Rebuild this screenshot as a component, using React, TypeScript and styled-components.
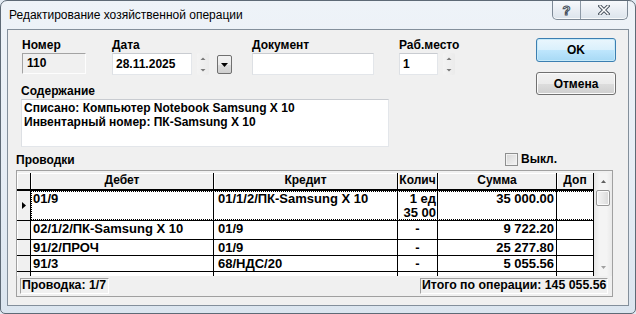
import React from "react";
import styled, { createGlobalStyle } from "styled-components";

const GlobalStyle = createGlobalStyle`
  html, body {
    margin: 0;
    padding: 0;
    background: #e3ebf3;
  }
  body {
    font-family: "Liberation Sans", Arial, sans-serif;
    font-size: 12px;
    color: #000;
  }
`;

const Window = styled.div`
  box-sizing: border-box;
  width: 636px;
  height: 314px;
  border: 1px solid #5e6a76;
  border-radius: 7px 7px 5px 5px;
  background: linear-gradient(180deg, #eef3f8 0%, #e6edf5 55%, #dbe5ef 100%);
  padding: 0 6px 7px 6px;
  display: flex;
  flex-direction: column;
  overflow: hidden;
`;

const TitleBar = styled.div`
  height: 28px;
  display: flex;
  justify-content: space-between;
  align-items: flex-start;
`;

const Title = styled.div`
  margin: 7px 0 0 2px;
  font: 12px/14px "Liberation Sans", Arial, sans-serif;
`;

const CaptionButtons = styled.div`
  display: flex;
  height: 18px;
  margin-right: 1px;
  border: 1px solid #7d8996;
  border-top: none;
  border-radius: 0 0 5px 5px;
  background: linear-gradient(180deg, #f7f9fc 0%, #e9eef4 50%, #dce4ec 100%);
  box-shadow: inset 0 -1px 0 rgba(255, 255, 255, 0.8);
  overflow: hidden;
`;

const CaptionButton = styled.div<{ $w: number }>`
  width: ${(p) => p.$w}px;
  display: flex;
  align-items: center;
  justify-content: center;
  & + & {
    border-left: 1px solid #8d99a6;
  }
`;

const HelpGlyph = styled.span`
  font: bold 13px/13px "Liberation Sans", Arial, sans-serif;
  color: #fff;
  -webkit-text-stroke: 1px #46505c;
  margin-top: 1px;
`;

const Client = styled.div`
  flex: 1;
  background: #f0f0f0;
  border: 1px solid #838f9b;
  display: flex;
  flex-direction: column;
`;

const TopSection = styled.div`
  display: flex;
  padding: 8px 12px 0 13px;
`;

const LeftPane = styled.div`
  flex: 1;
  display: flex;
  flex-direction: column;
`;

const FieldsRow = styled.div`
  display: flex;
  padding-left: 1px;
`;

const FieldGroup = styled.div<{ $w?: number }>`
  width: ${(p) => (p.$w ? `${p.$w}px` : "auto")};
  display: flex;
  flex-direction: column;
`;

const Label = styled.div`
  font-weight: bold;
  line-height: 15px;
  height: 15px;
  white-space: nowrap;
`;

const ControlRow = styled.div`
  display: flex;
  align-items: flex-start;
  height: 22px;
`;

const TextBox = styled.div<{ $w: number; $disabled?: boolean }>`
  box-sizing: border-box;
  width: ${(p) => p.$w}px;
  height: ${(p) => (p.$disabled ? 21 : 22)}px;
  padding: 0 3px;
  font-weight: bold;
  line-height: ${(p) => (p.$disabled ? 19 : 20)}px;
  background: ${(p) => (p.$disabled ? "#f0f0f0" : "#fff")};
  border: 1px solid;
  border-color: ${(p) =>
    p.$disabled
      ? "#a3a3a3 #fdfdfd #fdfdfd #a3a3a3"
      : "#c9ccd1 #e3e6ea #e3e6ea #dde0e4"};
  padding-left: ${(p) => (p.$disabled ? 4 : 3)}px;
`;

const SpinBox = styled.div`
  margin-left: 5px;
  width: 12px;
  height: 22px;
  display: flex;
  border-radius: 2px;
  background: linear-gradient(90deg, #f3f3f3, #ebebeb);
`;

const DropButton = styled.div`
  box-sizing: border-box;
  margin: 2px 0 0 8px;
  width: 15px;
  height: 19px;
  border: 1px solid #707070;
  border-radius: 2px;
  background: linear-gradient(180deg, #f2f2f2 0%, #ebebeb 50%, #dddddd 51%, #cfcfcf 100%);
  display: flex;
  align-items: center;
  justify-content: center;
`;

const ContentLabel = styled(Label)`
  margin-top: 9px;
`;

const Memo = styled.div`
  box-sizing: border-box;
  width: 368px;
  height: 48px;
  background: #fff;
  border: 1px solid;
  border-color: #c9ccd1 #e3e6ea #e3e6ea #dde0e4;
  padding: 1px 2px 0 2px;
  font-weight: bold;
  line-height: 14px;
`;

const ButtonsColumn = styled.div`
  width: 80px;
  display: flex;
  flex-direction: column;
  gap: 10px;
`;

const PushButton = styled.div<{ $default?: boolean; $h: number }>`
  box-sizing: border-box;
  height: ${(p) => p.$h}px;
  border: 1px solid ${(p) => (p.$default ? "#3c7fb1" : "#707070")};
  border-radius: 3px;
  background: ${(p) =>
    p.$default
      ? "linear-gradient(180deg, #eaf6fd 0%, #d9f0fc 50%, #bee6fd 51%, #a7d9f5 100%)"
      : "linear-gradient(180deg, #f2f2f2 0%, #ebebeb 50%, #dddddd 51%, #cfcfcf 100%)"};
  box-shadow: inset 0 0 0 1px ${(p) => (p.$default ? "#c7eaf9" : "#fbfbfb")};
  display: flex;
  align-items: center;
  justify-content: center;
  font-weight: bold;
  line-height: 14px;
`;

const ProvodkiRow = styled.div`
  height: 23px;
  display: flex;
  padding: 0 71px 0 8px;
`;

const ProvodkiLabel = styled(Label)`
  align-self: flex-end;
  margin-bottom: 2px;
`;

const CheckGroup = styled.div`
  margin-left: auto;
  margin-top: 2px;
  display: flex;
  align-items: center;
  gap: 3px;
  font-weight: bold;
  line-height: 15px;
`;

const CheckBox = styled.div`
  box-sizing: border-box;
  width: 13px;
  height: 13px;
  border: 1px solid #8e8f8f;
  background: linear-gradient(135deg, #d6d6d6 0%, #f4f4f4 100%);
  box-shadow: inset 0 0 0 1px #f2f2f2;
`;

const GridPanel = styled.div`
  box-sizing: border-box;
  margin-left: 8px;
  width: 597px;
  height: 127px;
  border: 1px solid #a0a0a0;
  padding-top: 2px;
  display: flex;
  flex-direction: column;
`;

const GridArea = styled.div`
  display: flex;
  height: 103px;
`;

const GridMain = styled.div`
  width: 577px;
  display: flex;
  flex-direction: column;
`;

const HeaderRow = styled.div`
  display: flex;
  height: 18px;
`;

const HeaderCell = styled.div<{ $w: number }>`
  box-sizing: border-box;
  width: ${(p) => p.$w}px;
  height: 18px;
  border-right: 1px solid #000;
  border-bottom: 2px solid #000;
  background: #f0f0f0;
  box-shadow: inset 1px 1px 0 #fff;
  text-align: center;
  font-weight: bold;
  line-height: 14px;
  white-space: nowrap;
  overflow: hidden;
`;

const GridBody = styled.div`
  height: 85px;
  overflow: hidden;
  display: flex;
  flex-direction: column;
`;

const Row = styled.div<{ $h: number }>`
  box-sizing: border-box;
  flex: none;
  display: flex;
  height: ${(p) => p.$h}px;
  border-bottom: 1px solid #000;
`;

const Indicator = styled.div`
  box-sizing: border-box;
  width: 14px;
  border-right: 1px solid #000;
  background: #f0f0f0;
  box-shadow: inset 1px 0 0 #fff;
  display: flex;
  align-items: center;
  padding-left: 5px;
`;

const Cells = styled.div<{ $focused?: boolean }>`
  display: flex;
  flex: 1;
  background: #fff;
  outline: ${(p) => (p.$focused ? "1px dotted #000" : "none")};
  outline-offset: -1px;
`;

const Cell = styled.div<{ $w: number; $align: string; $pl: number; $pr: number }>`
  box-sizing: border-box;
  width: ${(p) => p.$w}px;
  border-right: 1px solid #000;
  padding: 1px ${(p) => p.$pr}px 0 ${(p) => p.$pl}px;
  text-align: ${(p) => p.$align};
  font-weight: bold;
  font-size: 13px;
  line-height: 14px;
  white-space: nowrap;
  overflow: hidden;
`;

const ScrollBar = styled.div`
  width: 18px;
  display: flex;
  flex-direction: column;
  background: linear-gradient(90deg, #e6e6e6 0%, #f4f4f4 30%, #f4f4f4 70%, #e9e9e9 100%);
`;

const ScrollButton = styled.div`
  height: 17px;
  display: flex;
  align-items: center;
  justify-content: center;
`;

const Thumb = styled.div`
  box-sizing: border-box;
  margin: 0 2px 0 2px;
  height: 16px;
  border: 1px solid #979797;
  border-radius: 2px;
  background: linear-gradient(90deg, #f4f4f4 0%, #e8e8e8 50%, #d9d9d9 100%);
  box-shadow: inset 0 0 0 1px #fbfbfb;
`;

const Track = styled.div`
  flex: 1;
`;

const StatusBar = styled.div`
  height: 20px;
  display: flex;
  justify-content: space-between;
  align-items: flex-start;
  padding: 2px 4px 0 3px;
`;

const StatusBox = styled.div<{ $w: number }>`
  box-sizing: border-box;
  width: ${(p) => p.$w}px;
  height: 16px;
  border: 1px solid;
  border-color: #a0a0a0 #fff #fff #a0a0a0;
  padding: 0 2px 0 1px;
  font-weight: bold;
  font-size: 12.3px;
  line-height: 13px;
  white-space: nowrap;
  overflow: hidden;
`;

const Tri = ({ dir, color = "#707070", w = 5 }: { dir: "up" | "down" | "right"; color?: string; w?: number }) => {
  if (dir === "right")
    return (
      <svg width="4" height="7" viewBox="0 0 4 7">
        <path d="M0 0 L4 3.5 L0 7 Z" fill={color} />
      </svg>
    );
  const h = Math.ceil(w / 2);
  return (
    <svg width={w} height={h} viewBox={`0 0 ${w} ${h}`}>
      <path d={dir === "up" ? `M0 ${h} L${w / 2} 0 L${w} ${h} Z` : `M0 0 L${w / 2} ${h} L${w} 0 Z`} fill={color} />
    </svg>
  );
};

const Spinner = () => (
  <SpinBox>
    <svg width="12" height="22" viewBox="0 0 12 22">
      <path d="M3.5 7 L6 4.5 L8.5 7 Z" fill="#7a7a7a" />
      <path d="M3.5 16 L6 18.5 L8.5 16 Z" fill="#7a7a7a" />
    </svg>
  </SpinBox>
);

const CloseGlyph = () => (
  <svg width="12" height="10" viewBox="0 0 12 10">
    <path d="M2 1 L10 9 M10 1 L2 9" stroke="#46505c" strokeWidth="3.4" strokeLinecap="square" />
    <path d="M2 1 L10 9 M10 1 L2 9" stroke="#ffffff" strokeWidth="1.5" strokeLinecap="square" />
  </svg>
);

type Col = { title: string; w: number; align: string; pl: number; pr: number };

const columns: Col[] = [
  { title: "Дебет", w: 183, align: "left", pl: 2, pr: 2 },
  { title: "Кредит", w: 184, align: "left", pl: 4, pr: 2 },
  { title: "Колич", w: 40, align: "right", pl: 1, pr: 1 },
  { title: "Сумма", w: 119, align: "right", pl: 2, pr: 2 },
  { title: "Доп", w: 37, align: "left", pl: 2, pr: 2 },
];

type Entry = { cells: React.ReactNode[]; h: number; current?: boolean; centerQty?: boolean };

const rows: Entry[] = [
  {
    cells: ["01/9", "01/1/2/ПК-Samsung X 10", <>1 ед<br />35 00</>, "35 000.00", ""],
    h: 30,
    current: true,
  },
  { cells: ["02/1/2/ПК-Samsung X 10", "01/9", "-", "9 722.20", ""], h: 19, centerQty: true },
  { cells: ["91/2/ПРОЧ", "01/9", "-", "25 277.80", ""], h: 16, centerQty: true },
  { cells: ["91/3", "68/НДС/20", "-", "5 055.56", ""], h: 16, centerQty: true },
  { cells: ["", "", "", "", ""], h: 16 },
];

export default function App() {
  return (
    <>
      <GlobalStyle />
      <Window>
        <TitleBar>
          <Title>Редактирование хозяйственной операции</Title>
          <CaptionButtons>
            <CaptionButton $w={27}>
              <HelpGlyph>?</HelpGlyph>
            </CaptionButton>
            <CaptionButton $w={46}>
              <CloseGlyph />
            </CaptionButton>
          </CaptionButtons>
        </TitleBar>
        <Client>
          <TopSection>
            <LeftPane>
              <FieldsRow>
                <FieldGroup $w={90}>
                  <Label>Номер</Label>
                  <ControlRow>
                    <TextBox $w={64} $disabled>110</TextBox>
                  </ControlRow>
                </FieldGroup>
                <FieldGroup $w={140}>
                  <Label>Дата</Label>
                  <ControlRow>
                    <TextBox $w={80}>28.11.2025</TextBox>
                    <Spinner />
                    <DropButton>
                      <Tri dir="down" color="#000" w={7} />
                    </DropButton>
                  </ControlRow>
                </FieldGroup>
                <FieldGroup $w={147}>
                  <Label>Документ</Label>
                  <ControlRow>
                    <TextBox $w={122} />
                  </ControlRow>
                </FieldGroup>
                <FieldGroup>
                  <Label>Раб.место</Label>
                  <ControlRow>
                    <TextBox $w={39}>1</TextBox>
                    <Spinner />
                  </ControlRow>
                </FieldGroup>
              </FieldsRow>
              <ContentLabel>Содержание</ContentLabel>
              <Memo>
                Списано: Компьютер Notebook Samsung X 10
                <br />
                Инвентарный номер: ПК-Samsung X 10
              </Memo>
            </LeftPane>
            <ButtonsColumn>
              <PushButton $default $h={24}>OK</PushButton>
              <PushButton $h={23}>Отмена</PushButton>
            </ButtonsColumn>
          </TopSection>

          <ProvodkiRow>
            <ProvodkiLabel>Проводки</ProvodkiLabel>
            <CheckGroup>
              <CheckBox />
              <span>Выкл.</span>
            </CheckGroup>
          </ProvodkiRow>

          <GridPanel>
            <GridArea>
              <GridMain>
                <HeaderRow>
                  <HeaderCell $w={14} />
                  {columns.map((c) => (
                    <HeaderCell key={c.title} $w={c.w}>
                      {c.title}
                    </HeaderCell>
                  ))}
                </HeaderRow>
                <GridBody>
                  {rows.map((r, i) => (
                    <Row key={i} $h={r.h}>
                      <Indicator>{r.current && <Tri dir="right" color="#000" />}</Indicator>
                      <Cells $focused={r.current}>
                        {columns.map((c, j) => (
                          <Cell
                            key={c.title}
                            $w={c.w}
                            $align={j === 2 && r.centerQty ? "center" : c.align}
                            $pl={c.pl}
                            $pr={c.pr}
                          >
                            {r.cells[j]}
                          </Cell>
                        ))}
                      </Cells>
                    </Row>
                  ))}
                </GridBody>
              </GridMain>
              <ScrollBar>
                <ScrollButton>
                  <Tri dir="up" color="#606060" />
                </ScrollButton>
                <Thumb />
                <Track />
                <ScrollButton>
                  <Tri dir="down" color="#a0a0a0" />
                </ScrollButton>
              </ScrollBar>
            </GridArea>
            <StatusBar>
              <StatusBox $w={89}>Проводка: 1/7</StatusBox>
              <StatusBox $w={188}>Итого по операции: 145 055.56</StatusBox>
            </StatusBar>
          </GridPanel>
        </Client>
      </Window>
    </>
  );
}
